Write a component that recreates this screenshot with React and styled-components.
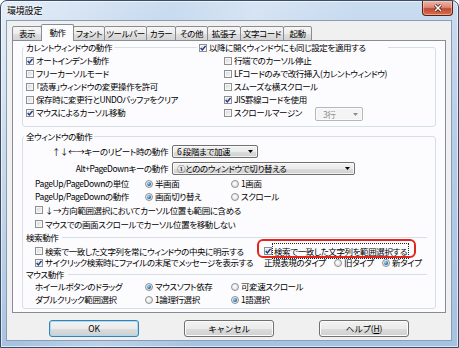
import React from "react";
import styled, { createGlobalStyle } from "styled-components";

const FONT = `"Liberation Sans Narrow", "Noto Sans CJK JP", sans-serif`;

const GlobalStyle = createGlobalStyle`
  html, body { margin: 0; padding: 0; background: #ffffff; }
  *, *::before, *::after { box-sizing: border-box; }
  body {
    font-family: ${FONT};
    font-size: 8.5px;
    letter-spacing: -0.4px;
    color: #000;
    font-feature-settings: "palt";
  }
`;

const Window = styled.div`
  width: 459px;
  height: 348px;
  border: 1px solid #3a4d64;
  border-radius: 7px 7px 0 0;
  background:
    linear-gradient(115deg, rgba(255,255,255,0.5) 0%, rgba(255,255,255,0) 28%, rgba(255,255,255,0.25) 42%, rgba(255,255,255,0) 58%),
    linear-gradient(180deg, #cadcf0 0%, #b6cde8 40%, #a6c2e1 100%);
  box-shadow: inset 0 0 0 1px rgba(255,255,255,0.6);
  display: flex;
  flex-direction: column;
  padding: 0 6px 6px 5px;
  overflow: hidden;
`;

const TitleBar = styled.div`
  height: 19px;
  display: flex;
  justify-content: space-between;
  align-items: flex-start;
`;

const Title = styled.div`
  padding: 5px 0 0 1px;
  font-family: "Noto Sans CJK JP", sans-serif;
  font-size: 9px;
  letter-spacing: -0.2px;
  line-height: 10px;
  text-shadow: 0 0 3px rgba(255,255,255,0.95), 0 0 6px rgba(255,255,255,0.8);
`;

const CloseButton = styled.div`
  width: 31px;
  height: 15px;
  margin-right: -1px;
  border: 1px solid #5b1f16;
  border-top: none;
  border-radius: 0 0 4px 4px;
  background: linear-gradient(180deg, #eeb3a5 0%, #dc8a77 45%, #c34a33 55%, #d4704f 100%);
  box-shadow: inset 0 0 0 1px rgba(255,230,220,0.45);
  display: flex;
  align-items: center;
  justify-content: center;
`;

const Client = styled.div`
  flex: 1;
  min-height: 0;
  background: #f0f0f0;
  border: 1px solid #8a9db3;
  padding: 3px 5px 0;
  display: flex;
  flex-direction: column;
`;

const TabStrip = styled.div`
  display: flex;
  align-items: flex-end;
  height: 17px;
  margin-bottom: -1px;
  position: relative;
  z-index: 1;
`;

const Tab = styled.div`
  width: ${(p) => p.$w}px;
  height: ${(p) => (p.$active ? 17 : 15)}px;
  margin-left: -1px;
  &:first-child { margin-left: 0; }
  border: 1px solid #898c95;
  border-bottom: ${(p) => (p.$active ? "none" : "1px solid #898c95")};
  border-radius: 2px 2px 0 0;
  background: ${(p) =>
    p.$active
      ? "#fcfcfe"
      : "linear-gradient(180deg, #f6f6f6 0%, #ececec 50%, #dfdfdf 51%, #d4d4d4 100%)"};
  position: relative;
  z-index: ${(p) => (p.$active ? 2 : 1)};
  display: flex;
  align-items: center;
  justify-content: center;
  padding-bottom: ${(p) => (p.$active ? 1 : 0)}px;
  white-space: nowrap;
  line-height: 1;
`;

const Panel = styled.div`
  width: 434px;
  height: 273px;
  background: #fcfcfe;
  border: 1px solid #898c95;
  padding: 1px 9px 0;
  display: flex;
  flex-direction: column;
`;

const Group = styled.fieldset`
  margin: ${(p) => p.$mt || 0}px 0 0;
  padding: 0;
  border: 1px solid #d5dfe5;
  border-radius: 3px;
  min-width: 0;
`;

const Legend = styled.legend`
  margin-left: 1px;
  padding: 0 2px;
  height: 11px;
  line-height: 11px;
  white-space: nowrap;
`;

const HeaderLegend = styled.legend`
  margin-left: 1px;
  padding: 0;
  width: 364px;
  height: 11px;
  line-height: 11px;
  display: flex;
  align-items: center;
  white-space: nowrap;
`;

const LegendText = styled.span`
  padding: 0 2px;
`;

const Rule = styled.span`
  flex: 1;
  height: 1px;
  background: #d5dfe5;
`;

const LegendCheck = styled.span`
  width: 189px;
  display: flex;
  align-items: center;
  gap: 1px;
  margin-left: 2px;
`;

const GroupBody = styled.div`
  padding: ${(p) => p.$pt}px 8px ${(p) => p.$pb}px 3px;
`;

const TwoColGrid = styled.div`
  display: grid;
  grid-template-columns: 198px 1fr;
  grid-auto-rows: 13px;
  align-items: center;
`;

const CheckItem = styled.span`
  display: flex;
  align-items: center;
  gap: 1px;
  white-space: nowrap;
  line-height: 1;
  width: ${(p) => (p.$w ? `${p.$w}px` : "auto")};
  flex: none;
`;

const Box = styled.span`
  width: 8px;
  height: 8px;
  flex: none;
  border: 1px solid #8e8f8f;
  background: linear-gradient(135deg, #cfd3d8 0%, #eef0f2 70%, #f8f8f8 100%);
  box-shadow: inset 0 0 0 1px #f6f6f6;
  display: inline-flex;
  align-items: center;
  justify-content: center;
  margin-right: 1px;
`;

const RadioDot = styled.span`
  width: 8px;
  height: 8px;
  flex: none;
  border-radius: 50%;
  border: 1px solid #8e8f8f;
  background: radial-gradient(circle at 40% 40%, #ffffff 0%, #e4e6e8 60%, #cfd2d6 100%);
  display: inline-flex;
  align-items: center;
  justify-content: center;
  margin-right: 2px;
  &::after {
    content: "";
    width: 4px;
    height: 4px;
    border-radius: 50%;
    background: radial-gradient(circle at 35% 35%, #9fe0fb 0%, #2a78c0 55%, #0b2f5e 100%);
    display: ${(p) => (p.$on ? "block" : "none")};
  }
`;

const RadioItem = styled.span`
  display: flex;
  align-items: center;
  white-space: nowrap;
  line-height: 1;
`;

const Select = styled.div`
  width: ${(p) => p.$w}px;
  height: ${(p) => p.$h || 13}px;
  display: flex;
  align-items: center;
  justify-content: space-between;
  padding: 0 4px 0 ${(p) => (p.$disabled ? 7 : 4)}px;
  border: 1px solid ${(p) => (p.$disabled ? "#b5b8bb" : "#707070")};
  border-radius: 2px;
  background: ${(p) =>
    p.$disabled
      ? "#f4f4f4"
      : "linear-gradient(180deg, #f2f2f2 0%, #ebebeb 50%, #dddddd 51%, #cfcfcf 100%)"};
  box-shadow: inset 0 0 0 1px ${(p) => (p.$disabled ? "#fbfbfb" : "rgba(255,255,255,0.7)")};
  color: ${(p) => (p.$disabled ? "#8d8d8d" : "#000")};
  line-height: 1;
  white-space: nowrap;
  flex: none;
  margin-top: ${(p) => p.$mt || 0}px;
`;

const ItemRow = styled.div`
  display: flex;
  align-items: center;
`;

const DropRow = styled.div`
  height: 17px;
  display: grid;
  grid-template-columns: 142px auto;
  column-gap: 4px;
  align-items: center;
`;

const DropLabel = styled.span`
  text-align: right;
  white-space: nowrap;
  line-height: 1;
`;

const RadioRow = styled.div`
  height: 13px;
  padding-left: 9px;
  display: grid;
  grid-template-columns: 110px 86px auto;
  align-items: center;
`;

const PlainLabel = styled.span`
  white-space: nowrap;
  line-height: 1;
`;

const CheckRow = styled.div`
  height: ${(p) => p.$h || 13}px;
  padding-left: 9px;
  display: grid;
  grid-template-columns: 229px auto;
  align-items: center;
`;

const SectionHeader = styled.div`
  height: ${(p) => p.$h}px;
  display: flex;
  align-items: center;
  gap: 4px;
  white-space: nowrap;
  line-height: 1;
`;

const AnnotatedCell = styled.div`
  position: relative;
  display: flex;
  align-items: center;
`;

const Annotation = styled.span`
  position: absolute;
  left: -7px;
  top: -4px;
  width: 159px;
  height: 19px;
  border: 2px solid #e3261d;
  border-radius: 6px;
  pointer-events: none;
`;

const FocusText = styled.span`
  border: 1px dotted #222;
  padding: 1px 1px;
  margin-left: -1px;
`;

const TypeCell = styled.div`
  display: grid;
  grid-template-columns: 70px 48px auto;
  align-items: center;
`;

const ButtonRow = styled.div`
  display: flex;
  justify-content: center;
  gap: 45px;
  padding-top: 7px;
`;

const Button = styled.button`
  width: 90px;
  height: 17px;
  padding: 0;
  font-family: ${FONT};
  font-size: 8.5px;
  letter-spacing: -0.2px;
  line-height: 1;
  color: #000;
  border: 1px solid ${(p) => (p.$default ? "#3c7fb1" : "#707070")};
  border-radius: 3px;
  background: linear-gradient(180deg, #f2f2f2 0%, #ebebeb 50%, #dddddd 51%, #cfcfcf 100%);
  box-shadow: inset 0 0 0 1px ${(p) => (p.$default ? "#a5dcf6" : "#fcfcfc")};
`;

const Underline = styled.span`
  text-decoration: underline;
`;

const Arrow = ({ color = "#000" }) => (
  <svg width="5" height="3" viewBox="0 0 5 3">
    <path d="M0 0h5L2.5 3z" fill={color} />
  </svg>
);

const CheckMark = () => (
  <svg width="6" height="6" viewBox="0 0 6 6">
    <path d="M0.6 3.1 L2.3 4.9 L5.5 0.9" stroke="#1f3a8a" strokeWidth="1.4" fill="none" />
  </svg>
);

const Check = ({ on }) => <Box>{on && <CheckMark />}</Box>;

const CheckBox = ({ on, label, w, children }) => (
  <CheckItem $w={w}>
    <Check on={on} />
    {label}
    {children}
  </CheckItem>
);

const Radio = ({ on, label }) => (
  <RadioItem>
    <RadioDot $on={on} />
    {label}
  </RadioItem>
);

const tabs = [
  ["表示", 30],
  ["動作", 33, true],
  ["フォント", 32],
  ["ツールバー", 43],
  ["カラー", 30],
  ["その他", 33],
  ["拡張子", 34],
  ["文字コード", 44],
  ["起動", 29],
];

export default function App() {
  return (
    <>
      <GlobalStyle />
      <Window>
        <TitleBar>
          <Title>環境設定</Title>
          <CloseButton>
            <svg width="10" height="8" viewBox="0 0 10 8">
              <path d="M2 1 L8 7 M8 1 L2 7" stroke="#4a1a12" strokeWidth="3" />
              <path d="M2 1 L8 7 M8 1 L2 7" stroke="#ffffff" strokeWidth="1.5" />
            </svg>
          </CloseButton>
        </TitleBar>
        <Client>
          <TabStrip>
            {tabs.map(([t, w, a]) => (
              <Tab key={t} $w={w} $active={a}>
                {t}
              </Tab>
            ))}
          </TabStrip>
          <Panel>
            <Group>
              <HeaderLegend>
                <LegendText>カレントウィンドウの動作</LegendText>
                <Rule />
                <LegendCheck>
                  <Check on />
                  以降に開くウィンドウにも同じ設定を適用する
                </LegendCheck>
              </HeaderLegend>
              <GroupBody $pt={1} $pb={7}>
                <TwoColGrid>
                  <CheckBox on label="オートインデント動作" />
                  <CheckBox label="行端でのカーソル停止" />
                  <CheckBox label="フリーカーソルモード" />
                  <CheckBox label="LFコードのみで改行挿入(カレントウィンドウ)" />
                  <CheckBox label="「読専」ウィンドウの変更操作を許可" />
                  <CheckBox label="スムーズな横スクロール" />
                  <CheckBox label="保存時に変更行とUNDOバッファをクリア" />
                  <CheckBox on label="JIS罫線コードを使用" />
                  <CheckBox on label="マウスによるカーソル移動" />
                  <ItemRow>
                    <CheckBox label="スクロールマージン" w={91} />
                    <Select $w={48} $h={14} $mt={3} $disabled>
                      3行
                      <Arrow color="#8d8d8d" />
                    </Select>
                  </ItemRow>
                </TwoColGrid>
              </GroupBody>
            </Group>

            <Group $mt={4}>
              <Legend>全ウィンドウの動作</Legend>
              <GroupBody $pt={1} $pb={2}>
                <DropRow>
                  <DropLabel>↑↓←→キーのリピート時の動作</DropLabel>
                  <Select $w={86}>
                    6 段階まで加速
                    <Arrow />
                  </Select>
                </DropRow>
                <DropRow>
                  <DropLabel>Alt+PageDownキーの動作</DropLabel>
                  <Select $w={183}>
                    ①とののウィンドウで切り替える
                    <Arrow />
                  </Select>
                </DropRow>
                <RadioRow>
                  <PlainLabel>PageUp/PageDownの単位</PlainLabel>
                  <Radio on label="半画面" />
                  <Radio label="1画面" />
                </RadioRow>
                <RadioRow>
                  <PlainLabel>PageUp/PageDownの動作</PlainLabel>
                  <Radio on label="画面切り替え" />
                  <Radio label="スクロール" />
                </RadioRow>
                <CheckRow $h={14}>
                  <CheckBox label="↓→方向範囲選択においてカーソル位置も範囲に含める" />
                </CheckRow>
                <CheckRow $h={14}>
                  <CheckBox label="マウスでの画面スクロールでカーソル位置を移動しない" />
                </CheckRow>
                <SectionHeader $h={12}>
                  検索動作
                  <Rule />
                </SectionHeader>
                <CheckRow>
                  <CheckBox label="検索で一致した文字列を常にウィンドウの中央に明示する" />
                  <AnnotatedCell>
                    <Check on />
                    <FocusText>検索で一致した文字列を範囲選択する</FocusText>
                    <Annotation />
                  </AnnotatedCell>
                </CheckRow>
                <CheckRow>
                  <CheckBox on label="サイクリック検索時にファイルの末尾でメッセージを表示する" />
                  <TypeCell>
                    <PlainLabel>正規表現のタイプ</PlainLabel>
                    <Radio label="旧タイプ" />
                    <Radio on label="新タイプ" />
                  </TypeCell>
                </CheckRow>
                <SectionHeader $h={11}>
                  マウス動作
                  <Rule />
                </SectionHeader>
                <RadioRow>
                  <PlainLabel>ホイールボタンのドラッグ</PlainLabel>
                  <Radio on label="マウスソフト依存" />
                  <Radio label="可変速スクロール" />
                </RadioRow>
                <RadioRow>
                  <PlainLabel>ダブルクリック範囲選択</PlainLabel>
                  <Radio label="1論理行選択" />
                  <Radio on label="1語選択" />
                </RadioRow>
              </GroupBody>
            </Group>
          </Panel>
          <ButtonRow>
            <Button $default>OK</Button>
            <Button>キャンセル</Button>
            <Button>
              ヘルプ(<Underline>H</Underline>)
            </Button>
          </ButtonRow>
        </Client>
      </Window>
    </>
  );
}
